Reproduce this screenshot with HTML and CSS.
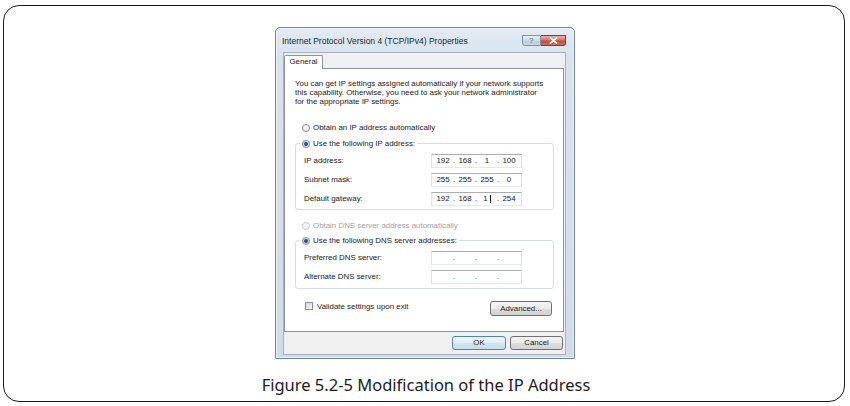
FILE: index.html
```html
<!DOCTYPE html>
<html>
<head>
<meta charset="utf-8">
<title>Figure 5.2-5</title>
<link rel="stylesheet" href="styles.css">
</head>
<body>
<div class="card">
  <div class="dialog">
    <div class="titlebar">
      <span class="title">Internet Protocol Version 4 (TCP/IPv4) Properties</span>
      <div class="caption-btns">
        <span class="cbtn help">?</span>
        <span class="cbtn close"><svg width="9" height="7" viewBox="0 0 9 7"><path d="M1.5 1 L7.5 6 M7.5 1 L1.5 6" stroke="#fff" stroke-width="1.7" stroke-linecap="round"/></svg></span>
      </div>
    </div>
    <div class="client">
      <div class="tabs"><span class="tab">General</span></div>
      <div class="panel">
        <p class="intro">You can get IP settings assigned automatically if your network supports<br>this capability. Otherwise, you need to ask your network administrator<br>for the appropriate IP settings.</p>
        <div class="opt first"><span class="radio"></span>Obtain an IP address automatically</div>
        <fieldset class="group ipgroup">
          <legend class="opt"><span class="radio on"></span>Use the following IP address:</legend>
          <div class="row"><span>IP address:</span><span class="ip"><span class="seg">192</span><span class="dot">.</span><span class="seg">168</span><span class="dot">.</span><span class="seg">1</span><span class="dot">.</span><span class="seg">100</span></span></div>
          <div class="row"><span>Subnet mask:</span><span class="ip"><span class="seg">255</span><span class="dot">.</span><span class="seg">255</span><span class="dot">.</span><span class="seg">255</span><span class="dot">.</span><span class="seg">0</span></span></div>
          <div class="row"><span>Default gateway:</span><span class="ip"><span class="seg">192</span><span class="dot">.</span><span class="seg">168</span><span class="dot">.</span><span class="seg">1<span class="caret"></span></span><span class="dot">.</span><span class="seg">254</span></span></div>
        </fieldset>
        <div class="opt dns disabled"><span class="radio dis"></span>Obtain DNS server address automatically</div>
        <fieldset class="group dnsgroup">
          <legend class="opt"><span class="radio on"></span>Use the following DNS server addresses:</legend>
          <div class="row"><span>Preferred DNS server:</span><span class="ip"><span class="seg"></span><span class="dot">.</span><span class="seg"></span><span class="dot">.</span><span class="seg"></span><span class="dot">.</span><span class="seg"></span></span></div>
          <div class="row"><span>Alternate DNS server:</span><span class="ip"><span class="seg"></span><span class="dot">.</span><span class="seg"></span><span class="dot">.</span><span class="seg"></span><span class="dot">.</span><span class="seg"></span></span></div>
        </fieldset>
        <div class="validate">
          <div class="check-label"><span class="checkbox"></span>Validate settings upon exit</div>
          <span class="btn advanced">Advanced...</span>
        </div>
      </div>
      <div class="footer">
        <span class="btn ok">OK</span>
        <span class="btn cancel">Cancel</span>
      </div>
    </div>
  </div>
  <p class="figcap">Figure 5.2-5 Modification of the IP Address</p>
</div>
</body>
</html>
```

FILE: styles.css
```css
html, body {
  margin: 0;
  padding: 0;
  background: #ffffff;
}

.card {
  box-sizing: border-box;
  margin: 5px 0 0 3px;
  width: 842px;
  height: 397px;
  border: 1.5px solid #1c1c1c;
  border-radius: 16px;
  padding-top: 20.5px;
  display: flex;
  flex-direction: column;
  align-items: center;
  background: #fff;
}

/* ---------- dialog window ---------- */
.dialog {
  box-sizing: border-box;
  width: 300px;
  margin-left: 2px;
  border: 1px solid #738496;
  border-radius: 5px 5px 1px 1px;
  background: linear-gradient(#e3ebf4 0, #d8e3ee 30px, #cfdcea 100%);
  box-shadow: inset 0 0 0 1px rgba(255, 255, 255, 0.55);
  padding: 0 8px 3px 7px;
  font-family: "Liberation Sans", Arial, sans-serif;
  font-size: 7.9px;
  color: #1b1b1b;
}

.titlebar {
  height: 24px;
  display: flex;
  align-items: center;
  justify-content: space-between;
}

.title {
  font-size: 8.5px;
  color: #20262e;
  margin-left: -1px;
  padding-top: 2px;
}

.caption-btns {
  display: flex;
  align-self: flex-start;
  margin-top: 7px;
}

.cbtn {
  box-sizing: border-box;
  height: 11px;
  display: flex;
  align-items: center;
  justify-content: center;
}

.help {
  width: 19px;
  border: 1px solid #8193a7;
  border-radius: 0 0 0 3px;
  background: linear-gradient(#edf2f8, #cbd8e6 50%, #bccde0 51%, #c9d8e8);
  color: #7d93ad;
  font-size: 8px;
  font-weight: bold;
  line-height: 9px;
}

.close {
  width: 25px;
  border: 1px solid #8c3b31;
  border-left: none;
  border-radius: 0 0 3px 0;
  background: linear-gradient(#eab0a4, #d8786a 45%, #c64b39 55%, #d56a55);
}

.close svg {
  display: block;
}

/* ---------- client area ---------- */
.client {
  background: #f0f0f0;
  border: 1px solid #a4b2c1;
  padding: 2px 1px 4px 0;
  display: flex;
  flex-direction: column;
}

.tabs {
  display: flex;
}

.tab {
  position: relative;
  z-index: 1;
  box-sizing: border-box;
  width: 39px;
  height: 14px;
  margin-bottom: -1px;
  border: 1px solid #8e939b;
  border-bottom: none;
  border-radius: 2px 2px 0 0;
  background: #fff;
  display: flex;
  align-items: center;
  justify-content: center;
  padding-bottom: 1px;
}

.panel {
  background: #fff;
  border: 1px solid #8e939b;
  padding: 10px 9px 15px 10px;
  display: flex;
  flex-direction: column;
}

.intro {
  margin: 0;
  line-height: 9px;
  white-space: nowrap;
}

.opt {
  display: flex;
  align-items: center;
  height: 10px;
  white-space: nowrap;
}

.opt.first {
  margin: 17px 0 0 7px;
}

.opt.dns {
  margin: 11px 0 0 7px;
}

.disabled {
  color: #a2a2a2;
}

.radio {
  box-sizing: border-box;
  width: 8px;
  height: 8px;
  border-radius: 50%;
  border: 1px solid #8d8f93;
  background: radial-gradient(circle at 40% 35%, #ffffff, #dadde2);
  margin-right: 3px;
  flex: none;
}

.radio.on {
  background: radial-gradient(circle at 50% 50%, #1f4f8f 0, #2f67aa 1.6px, #c9d7e6 2.4px, #eef2f6 100%);
}

.radio.dis {
  border-color: #c9cacc;
  background: #f4f4f4;
}

.group {
  margin: 6px 0 0 0;
  border: 1px solid #d5dde3;
  border-radius: 3px;
  min-width: 0;
  display: flex;
  flex-direction: column;
  gap: 5px;
}

.group legend {
  padding: 0 2px;
  margin-left: -4px;
}

.ipgroup {
  padding: 5px 31px 3px 8px;
}

.dnsgroup {
  margin-top: 5px;
  padding: 5px 31px 4px 8px;
}

.row {
  display: flex;
  align-items: center;
  justify-content: space-between;
  height: 14px;
}

.ip {
  box-sizing: border-box;
  width: 91px;
  height: 14px;
  border: 1px solid;
  border-color: #abadb3 #dbdfe6 #e3e9ef #e2e3ea;
  background: #fff;
  display: flex;
  align-items: center;
  padding-left: 1px;
  color: #1b1b1b;
}

.seg {
  width: 20px;
  text-align: center;
  display: flex;
  align-items: center;
  justify-content: center;
}

.dot {
  width: 2px;
  text-align: center;
}

.caret {
  display: inline-block;
  width: 1px;
  height: 8px;
  background: #111;
  margin-left: 2px;
}

.validate {
  display: flex;
  justify-content: space-between;
  align-items: flex-start;
  margin-top: 12px;
}

.check-label {
  display: flex;
  align-items: center;
  height: 9px;
  margin: 1px 0 0 10px;
}

.checkbox {
  box-sizing: border-box;
  width: 8px;
  height: 8px;
  border: 1px solid #8d8f93;
  background: linear-gradient(135deg, #d4d6d9, #f7f8f9);
  margin-right: 4px;
}

.btn {
  box-sizing: border-box;
  height: 14px;
  display: flex;
  align-items: center;
  justify-content: center;
  border: 1px solid #707070;
  border-radius: 3px;
  background: linear-gradient(#f4f4f4 0, #ececec 50%, #dedede 51%, #d2d2d2 100%);
  color: #1b1b1b;
}

.advanced {
  width: 62px;
  height: 15px;
  margin-right: 2px;
}

.footer {
  display: flex;
  justify-content: flex-end;
  gap: 4px;
  margin-top: 4px;
  padding-right: 1px;
}

.ok {
  width: 54px;
  border-color: #4b86b4;
  background: linear-gradient(#eef6fb 0, #e2eef6 50%, #d2e5f1 51%, #c6dceb 100%);
}

.cancel {
  width: 53px;
}

/* ---------- caption ---------- */
.figcap {
  margin: 16px 0 0 4px;
  font-family: "Noto Sans", "Open Sans", sans-serif;
  font-size: 16.5px;
  line-height: 20px;
  color: #1c1c1c;
}
```
